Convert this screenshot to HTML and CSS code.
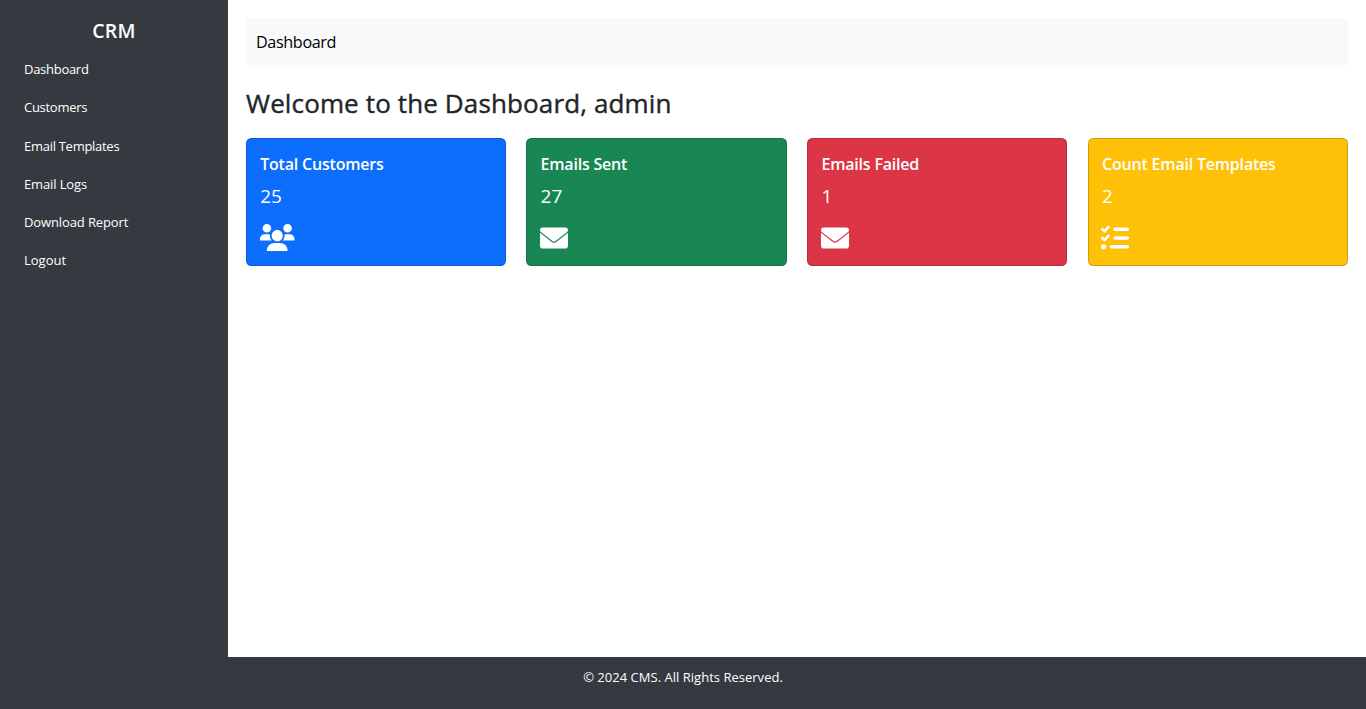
FILE: index.html
```html
<!DOCTYPE html>
<html lang="en">
<head>
<meta charset="utf-8">
<title>Dashboard</title>
<link rel="stylesheet" href="styles.css">
</head>
<body>
<div class="shell">
  <aside class="sidebar">
    <h4 class="brand"><span>CRM</span></h4>
    <nav class="menu">
      <a class="menu-link"><span>Dashboard</span></a>
      <a class="menu-link"><span>Customers</span></a>
      <a class="menu-link"><span>Email Templates</span></a>
      <a class="menu-link loose"><span>Email Logs</span></a>
      <a class="menu-link loose"><span>Download Report</span></a>
      <a class="menu-link looser"><span>Logout</span></a>
    </nav>
  </aside>
  <main class="content">
    <div class="topbar"><span>Dashboard</span></div>
    <h2 class="welcome"><span>Welcome to the Dashboard, admin</span></h2>
    <div class="cards">
      <section class="card card-primary">
        <h5 class="card-title"><span>Total Customers</span></h5>
        <p class="card-value">25</p>
        <svg class="icon icon-wide" viewBox="0 0 640 512"><path d="M319.900 320c57.410 0 103.100-46.560 103.100-104c0-57.440-46.540-104-103.100-104c-57.410 0-103.100 46.560-103.100 104C215.900 273.400 262.500 320 319.900 320zM369.900 352H270.100C191.600 352 128 411.700 128 485.300C128 500.100 140.700 512 156.400 512h327.200C499.300 512 512 500.100 512 485.300C512 411.700 448.400 352 369.900 352zM512 160c44.180 0 80-35.820 80-80S556.200 0 512 0c-44.180 0-80 35.820-80 80S467.800 160 512 160zM183.900 216c0-5.449 .9824-10.630 1.609-15.910C174.600 194.100 162.600 192 149.900 192H88.080C39.440 192 0 233.800 0 285.300C0 295.600 7.887 304 17.620 304h199.500C196.700 280.200 183.900 249.700 183.900 216zM128 160c44.180 0 80-35.820 80-80S172.200 0 128 0C83.820 0 48 35.820 48 80S83.820 160 128 160zM551.900 192h-61.840c-12.800 0-24.880 3.037-35.860 8.240C454.800 205.500 455.800 210.600 455.800 216c0 33.710-12.780 64.210-33.160 88h199.700C632.100 304 640 295.600 640 285.300C640 233.800 600.600 192 551.900 192z"/></svg>
      </section>
      <section class="card card-success">
        <h5 class="card-title"><span>Emails Sent</span></h5>
        <p class="card-value">27</p>
        <svg class="icon" viewBox="0 0 512 512"><path d="M256 341c-16.530 0-33.060-5.422-47.160-16.410L0 162.200V400C0 426.500 21.490 448 48 448h416c26.510 0 48-21.490 48-48V162.200l-208.800 162.500C289.100 335.600 272.500 341 256 341zM16.290 145.300l212.200 165.100c16.190 12.600 38.870 12.600 55.060 0l212.200-165.100C505.100 137.300 512 125 512 112C512 85.490 490.500 64 464 64h-416C21.490 64 0 85.490 0 112C0 125 6.010 137.300 16.290 145.300z"/></svg>
      </section>
      <section class="card card-danger">
        <h5 class="card-title"><span>Emails Failed</span></h5>
        <p class="card-value">1</p>
        <svg class="icon" viewBox="0 0 512 512"><path d="M256 341c-16.530 0-33.060-5.422-47.160-16.410L0 162.200V400C0 426.500 21.490 448 48 448h416c26.510 0 48-21.490 48-48V162.200l-208.800 162.500C289.100 335.600 272.500 341 256 341zM16.290 145.300l212.200 165.100c16.190 12.600 38.870 12.600 55.060 0l212.200-165.100C505.100 137.300 512 125 512 112C512 85.490 490.500 64 464 64h-416C21.490 64 0 85.490 0 112C0 125 6.010 137.300 16.290 145.300z"/></svg>
      </section>
      <section class="card card-warning">
        <h5 class="card-title"><span>Count Email Templates</span></h5>
        <p class="card-value">2</p>
        <svg class="icon icon-list" viewBox="0 0 512 512"><path d="M152.1 38.2c9.900 8.900 10.700 24 1.800 33.900l-72 80c-4.400 4.900-10.600 7.800-17.200 7.900s-12.900-2.400-17.600-7L7 113C-2.300 103.600-2.300 88.400 7 79s24.600-9.400 33.900 0l22.100 22.100 55.100-61.200c8.900-9.900 24-10.700 33.900-1.800zm0 160c9.900 8.900 10.700 24 1.800 33.900l-72 80c-4.400 4.900-10.600 7.800-17.200 7.900s-12.900-2.400-17.600-7L7 273c-9.400-9.400-9.400-24.600 0-33.900s24.600-9.400 33.900 0l22.100 22.100 55.100-61.200c8.900-9.900 24-10.700 33.900-1.800zM224 96c0-17.700 14.300-32 32-32H480c17.700 0 32 14.300 32 32s-14.300 32-32 32H256c-17.700 0-32-14.300-32-32zm0 160c0-17.700 14.300-32 32-32H480c17.700 0 32 14.300 32 32s-14.300 32-32 32H256c-17.700 0-32-14.300-32-32zM160 416c0-17.700 14.300-32 32-32H480c17.700 0 32 14.300 32 32s-14.300 32-32 32H192c-17.700 0-32-14.300-32-32zM48 368a48 48 0 1 1 0 96 48 48 0 1 1 0-96z"/></svg>
      </section>
    </div>
  </main>
</div>
<footer class="footer"><span>© 2024 CMS. All Rights Reserved.</span></footer>
</body>
</html>
```
FILE: styles.css
```css
* { box-sizing: border-box; }
body {
  margin: 0;
  height: 709px;
  display: flex;
  flex-direction: column;
  overflow: hidden;
  background: #fff;
  color: #212529;
  font-family: "Segoe UI", "Open Sans", "Noto Sans", sans-serif;
}
h2, h4, h5, p { margin: 0; }
.shell { flex: 1; display: flex; min-height: 0; }
.sidebar {
  width: 228px;
  background: #343a40;
  color: #fff;
  padding-top: 18px;
}
.brand {
  font-size: 19.5px;
  line-height: 26px;
  font-weight: 600;
  letter-spacing: 0.2px;
  text-align: center;
}
.menu { display: flex; flex-direction: column; padding-top: 6.2px; }
.menu-link {
  height: 38.2px;
  line-height: 38px;
  padding-left: 24px;
  font-size: 13px;
  letter-spacing: -0.28px;
  white-space: nowrap;
}
.loose { letter-spacing: -0.12px; }
.looser { letter-spacing: 0; }
.content { flex: 1; padding: 18px 18px 0; min-width: 0; }
.topbar {
  height: 47px;
  line-height: 49px;
  padding-left: 10px;
  background: #f8f9fa;
  color: #000;
  font-size: 16.2px;
  font-weight: 400;
  letter-spacing: -0.38px;
}
.welcome {
  margin-top: 21px;
  height: 52px;
  line-height: 34px;
  font-size: 26px;
  font-weight: 400;
  letter-spacing: 0.13px;
  -webkit-text-stroke: 0.4px currentColor;
  white-space: nowrap;
}
.cards { display: grid; grid-template-columns: repeat(4, 1fr); gap: 20.5px; }
.card {
  height: 128px;
  padding: 13px 13.2px;
  border: 1px solid rgba(0, 0, 0, 0.176);
  border-radius: 5.4px;
  color: #fff;
}
.card-primary { background: #0d6efd; }
.card-success { background: #198754; margin-left: -0.3px; }
.card-danger { background: #dc3545; }
.card-warning { background: #ffc107; }
.card-title {
  font-size: 16px;
  line-height: 24px;
  font-weight: 600;
  letter-spacing: -0.2px;
  white-space: nowrap;
}
.card-value { font-size: 19px; line-height: 28px; margin-top: 6px; }
.icon {
  display: block;
  width: 28px;
  height: 28px;
  margin: 13.7px 0 0 -0.1px;
  fill: currentColor;
}
.icon-wide { width: 34.5px; height: 27.6px; margin-left: 0; }
.icon-list { margin-left: -0.8px; }
.footer {
  height: 52px;
  line-height: 40px;
  background: #343a40;
  color: #fff;
  font-size: 13px;
  letter-spacing: 0.02px;
  text-align: center;
}
```
